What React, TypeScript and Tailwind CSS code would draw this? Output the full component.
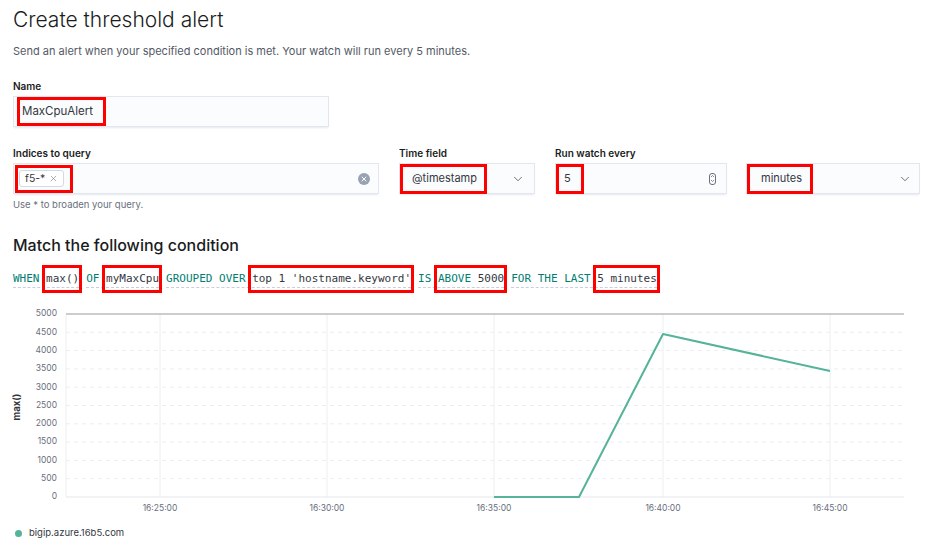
import { ChevronDown, X } from "lucide-react";

const mono = "font-['DejaVu_Sans_Mono',monospace] text-[11px]";

function Label({ children }: { children: React.ReactNode }) {
  return (
    <div className="h-[14px] text-[10px] leading-[14px] font-semibold text-[#1a1c21]">
      {children}
    </div>
  );
}

function Field({
  label,
  className,
  children,
}: {
  label: string;
  className: string;
  children: React.ReactNode;
}) {
  return (
    <div className={className}>
      <Label>{label}</Label>
      <div className="mt-[3px] h-[31px] flex items-center bg-[#fbfcfd] border border-[#e3e6ee] shadow-[0_2px_2px_-1px_rgba(152,162,179,0.25)] text-[11px] text-[#343741]">
        {children}
      </div>
    </div>
  );
}

// red annotation box laid over an expression value
function Marked({
  children,
  left = 4,
}: {
  children: React.ReactNode;
  left?: number;
}) {
  return (
    <span className="relative inline-block">
      {children}
      <span
        className="absolute -top-[7px] -bottom-[7px] -right-[3px] border-[3px] border-[#ff0000]"
        style={{ left: -left }}
      />
    </span>
  );
}

function Expr({
  desc,
  children,
}: {
  desc: string;
  children: React.ReactNode;
}) {
  return (
    <span className="inline-flex items-center gap-[6.6px] border-b border-dashed border-[#c8cde0] leading-[14px] pb-[1px] mr-[7px]">
      <span className="text-[#017d73]">{desc}</span>
      {children}
    </span>
  );
}

const yTicks = [5000, 4500, 4000, 3500, 3000, 2500, 2000, 1500, 1000, 500, 0];
const xTicks = [
  { x: 160, t: "16:25:00" },
  { x: 327, t: "16:30:00" },
  { x: 494, t: "16:35:00" },
  { x: 663, t: "16:40:00" },
  { x: 830, t: "16:45:00" },
];

function Chart() {
  const top = 14;
  const bottom = 197;
  const step = (bottom - top) / 10;
  return (
    <svg width={936} height={222} className="block">
      {yTicks.map((v, i) => {
        const y = top + i * step;
        return (
          <g key={v}>
            {i > 0 && i < 10 && (
              <line
                x1={66}
                x2={904}
                y1={y}
                y2={y}
                stroke="#eceef2"
                strokeDasharray="4 4"
              />
            )}
            <text
              x={57}
              y={y}
              textAnchor="end"
              dominantBaseline="middle"
              fontSize={8.5}
              fill="#69707d"
              fontFamily="Inter, sans-serif"
            >
              {v}
            </text>
          </g>
        );
      })}
      {xTicks.map((t) => (
        <g key={t.t}>
          <line x1={t.x} x2={t.x} y1={top} y2={bottom} stroke="#eceef2" />
          <text
            x={t.x}
            y={209}
            textAnchor="middle"
            dominantBaseline="middle"
            fontSize={8.5}
            fill="#69707d"
            fontFamily="Inter, sans-serif"
          >
            {t.t}
          </text>
        </g>
      ))}
      <line x1={66} x2={66} y1={top} y2={bottom} stroke="#eceef2" />
      <line x1={66} x2={904} y1={bottom} y2={bottom} stroke="#e4e7ec" />
      <line x1={66} x2={904} y1={top} y2={top} stroke="#999999" strokeWidth={1.2} />
      <text
        x={17}
        y={107}
        transform="rotate(-90 17 107)"
        textAnchor="middle"
        dominantBaseline="middle"
        fontSize={9.5}
        fontWeight={700}
        fill="#343741"
        fontFamily="Inter, sans-serif"
      >
        max()
      </text>
      <polyline
        points="494,197 579,197 663,34 830,71"
        fill="none"
        stroke="#54b399"
        strokeWidth={2}
        strokeLinejoin="round"
      />
    </svg>
  );
}

export default function App() {
  return (
    <div className="w-[936px] h-[545px] overflow-hidden bg-white font-['Inter',sans-serif] text-[#343741]">
      <div className="pl-[13px] pt-[7px]">
        <h1 className="text-[21px] leading-[25px] font-light text-[#1a1c21]">
          Create threshold alert
        </h1>
        <p className="mt-[11px] text-[11px] leading-[16px] text-[#535966]">
          Send an alert when your specified condition is met. Your watch will
          run every 5 minutes.
        </p>

        <div className="mt-[20px]">
          <Field label="Name" className="w-[316px]">
            <span className="ml-[3px] h-[29px] flex items-center border-[3px] border-[#ff0000] pl-[2px] pr-[10px] text-[11.5px]">
              MaxCpuAlert
            </span>
          </Field>
        </div>

        <div className="mt-[19px] flex">
          <div className="w-[366px]">
            <Label>Indices to query</Label>
            <div className="mt-[3px] h-[31px] flex items-center bg-[#fbfcfd] border border-[#e3e6ee] shadow-[0_2px_2px_-1px_rgba(152,162,179,0.25)]">
              <span className="ml-[1px] h-[28px] flex items-center border-[3px] border-[#ff0000] pl-[1px] pr-[6px]">
                <span className="h-[17px] flex items-center gap-[4px] border border-[#d3dae6] rounded-[3px] bg-white px-[5px] text-[10.5px] text-[#343741]">
                  f5-*
                  <X size={9} strokeWidth={1.5} className="text-[#69707d]" />
                </span>
              </span>
              <span className="ml-auto mr-[8px] w-[12px] h-[12px] rounded-full bg-[#98a2b3] flex items-center justify-center">
                <X size={8} strokeWidth={3} className="text-white" />
              </span>
            </div>
            <div className="mt-[4px] text-[9.5px] leading-[14px] text-[#69707d]">
              Use * to broaden your query.
            </div>
          </div>

          <Field label="Time field" className="ml-[20px] w-[136px]">
            <span className="h-[30px] flex items-center border-[3px] border-[#ff0000] pl-[9px] pr-[7px]">
              @timestamp
            </span>
            <ChevronDown
              size={14}
              strokeWidth={1.2}
              className="ml-auto mr-[9px] text-[#343741]"
            />
          </Field>

          <Field label="Run watch every" className="ml-[20px] w-[172px]">
            <span className="h-[30px] flex items-center border-[3px] border-[#ff0000] pl-[5px] pr-[10px]">
              5
            </span>
            <span className="ml-auto mr-[10px] w-[7px] h-[12px] rounded-[3px] border border-[#69707d] flex items-center justify-center">
              <svg width="5" height="9" viewBox="0 0 5 9">
                <path d="M1 3 L2.5 1.5 L4 3" fill="none" stroke="#69707d" strokeWidth="0.8" />
                <path d="M1 6 L2.5 7.5 L4 6" fill="none" stroke="#69707d" strokeWidth="0.8" />
              </svg>
            </span>
          </Field>

          <Field label="" className="ml-[19px] w-[174px]">
            <span className="h-[30px] flex items-center border-[3px] border-[#ff0000] pl-[11px] pr-[8px]">
              minutes
            </span>
            <ChevronDown
              size={14}
              strokeWidth={1.2}
              className="ml-auto mr-[7px] text-[#343741]"
            />
          </Field>
        </div>

        <h2 className="mt-[23px] text-[16px] leading-[20px] font-medium text-[#1a1c21]">
          Match the following condition
        </h2>

        <div className={`mt-[11px] h-[28px] flex items-center ${mono}`}>
          <Expr desc="WHEN">
            <Marked>
              <span className="text-[#343741]">max()</span>
            </Marked>
          </Expr>
          <Expr desc="OF">
            <Marked>
              <span className="text-[#343741]">myMaxCpu</span>
            </Marked>
          </Expr>
          <Expr desc="GROUPED OVER">
            <Marked>
              <span className="text-[#343741]">top 1 'hostname.keyword'</span>
            </Marked>
          </Expr>
          <Expr desc="IS">
            <Marked>
              <span className="text-[#017d73]">ABOVE</span>{" "}
              <span className="text-[#343741]">5000</span>
            </Marked>
          </Expr>
          <Expr desc="FOR THE LAST">
            <Marked>
              <span className="text-[#343741]">5 minutes</span>
            </Marked>
          </Expr>
        </div>
      </div>

      <div className="mt-[6px]">
        <Chart />
      </div>

      <div className="mt-[4px] pl-[15px] h-[14px] flex items-center gap-[7px] text-[9.5px] text-[#343741]">
        <span className="w-[7px] h-[7px] rounded-full bg-[#54b399]" />
        bigip.azure.16b5.com
      </div>
    </div>
  );
}
